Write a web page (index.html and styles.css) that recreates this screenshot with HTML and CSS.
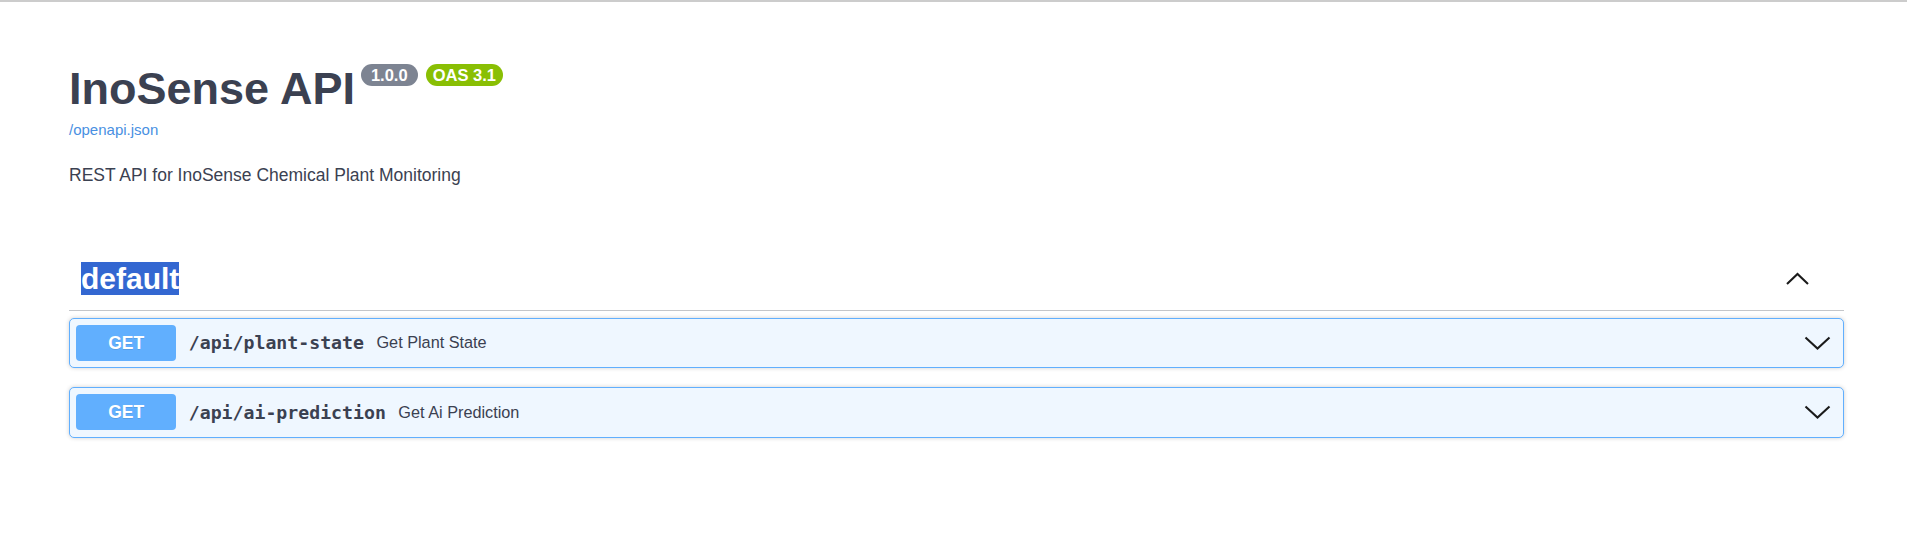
FILE: index.html
```html
<!DOCTYPE html>
<html lang="en">
<head>
<meta charset="utf-8">
<title>InoSense API</title>
<link rel="stylesheet" href="styles.css">
</head>
<body>
<div class="topline"></div>
<div class="wrapper">
  <section class="info">
    <h2 class="title">
      <span class="title-text">InoSense API</span>
      <small class="badge badge-version">1.0.0</small>
      <small class="badge badge-oas">OAS 3.1</small>
    </h2>
    <a class="spec-link" href="#">/openapi.json</a>
    <p class="description">REST API for InoSense Chemical Plant Monitoring</p>
  </section>

  <section class="tag-section">
    <div class="tag">
      <h3 class="tag-name"><span class="tag-sel">default</span></h3>
      <button class="tag-toggle" aria-label="collapse">
        <svg width="25" height="13" viewBox="0 0 25 13"><polyline points="2,12 12.5,2 23,12" fill="none" stroke="#1b1b1b" stroke-width="2.1"/></svg>
      </button>
    </div>

    <div class="opblock">
      <div class="opblock-summary">
        <span class="method">GET</span>
        <span class="path">/api/plant-state</span>
        <span class="summary">Get Plant State</span>
        <span class="chev">
          <svg width="27" height="14" viewBox="0 0 27 14"><polyline points="1.5,1.5 13.5,12.5 25.5,1.5" fill="none" stroke="#1b1b1b" stroke-width="2.1"/></svg>
        </span>
      </div>
    </div>

    <div class="opblock">
      <div class="opblock-summary">
        <span class="method">GET</span>
        <span class="path">/api/ai-prediction</span>
        <span class="summary">Get Ai Prediction</span>
        <span class="chev">
          <svg width="27" height="14" viewBox="0 0 27 14"><polyline points="1.5,1.5 13.5,12.5 25.5,1.5" fill="none" stroke="#1b1b1b" stroke-width="2.1"/></svg>
        </span>
      </div>
    </div>
  </section>
</div>
</body>
</html>
```

FILE: styles.css
```css
html, body {
  margin: 0;
  padding: 0;
  background: #fff;
}

body {
  font-family: "Liberation Sans", Arial, sans-serif;
  color: #3b4151;
}

.topline {
  height: 2px;
  background: #cccccc;
}

.wrapper {
  width: 1775px;
  padding-left: 69px;
  box-sizing: content-box;
}

.info {
  padding-top: 61px;
}

.title {
  display: flex;
  align-items: flex-start;
  margin: 0;
  font-size: 45px;
  line-height: 52px;
  font-weight: bold;
  color: #3b4151;
}

.title-text {
  display: block;
}

.badge {
  display: inline-block;
  margin-top: 1px;
  height: 22px;
  line-height: 22px;
  border-radius: 12px;
  font-size: 16.5px;
  font-weight: bold;
  color: #fff;
  font-family: "Liberation Sans", Arial, sans-serif;
}

.badge-version {
  background: #7d8492;
  margin-left: 6px;
  padding: 0 10px;
}

.badge-oas {
  background: #89bf04;
  margin-left: 8px;
  padding: 0 7px;
}

.spec-link {
  display: block;
  margin-top: 6px;
  font-size: 15px;
  line-height: 17px;
  color: #4990e2;
  text-decoration: none;
}

.description {
  margin: 27px 0 0;
  font-size: 17.5px;
  line-height: 20px;
}

.tag-section {
  margin-top: 61px;
}

.tag {
  display: flex;
  align-items: center;
  height: 39px;
  padding: 12.5px 26px 12.5px 12px;
  border-bottom: 1px solid rgba(59, 65, 81, 0.3);
  margin-bottom: 6.5px;
}

.tag-name {
  flex: 1;
  margin: 0;
  font-size: 30px;
  font-weight: bold;
  line-height: 39px;
}

.tag-sel {
  background: #3367d1;
  color: #fff;
}

.tag-toggle {
  border: 0;
  background: none;
  padding: 0;
  width: 25px;
  height: 25px;
  display: flex;
  align-items: center;
  justify-content: center;
  margin-right: 8px;
}

.tag-toggle svg {
  display: block;
}

.opblock {
  background: #eff7ff;
  border: 1px solid #61affe;
  border-radius: 5px;
  box-shadow: 0 0 4px rgba(0, 0, 0, 0.19);
  margin-bottom: 19px;
}

.opblock-summary {
  display: flex;
  align-items: center;
  padding: 6.25px;
}

.method {
  display: inline-block;
  width: 100px;
  height: 36px;
  line-height: 36px;
  text-align: center;
  background: #61affe;
  color: #fff;
  border-radius: 4px;
  font-size: 17.5px;
  font-weight: bold;
  text-shadow: 0 1px 0 rgba(0, 0, 0, 0.1);
}

.path {
  padding: 0 12.5px;
  font-family: "DejaVu Sans Mono", "Liberation Mono", monospace;
  font-weight: bold;
  font-size: 18.2px;
  color: #3b4151;
}

.summary {
  flex: 1;
  font-size: 16.25px;
  color: #3b4151;
}

.chev {
  display: flex;
  align-items: center;
  margin-right: 6px;
}

.chev svg {
  display: block;
}
```
